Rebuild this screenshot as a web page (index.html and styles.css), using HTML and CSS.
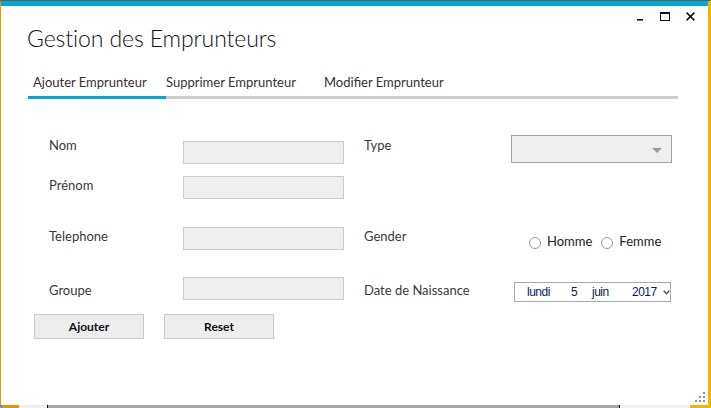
FILE: index.html
```html
<!DOCTYPE html>
<html lang="fr">
<head>
<meta charset="utf-8">
<title>Gestion des Emprunteurs</title>
<link rel="stylesheet" href="styles.css">
</head>
<body>
<div class="desktop">
  <div class="window">
    <div class="chrome">
      <svg class="ctl ctl-min" width="6" height="9" viewBox="0 0 6 9"><rect x="0" y="7" width="6" height="1.6" fill="#111"/></svg>
      <svg class="ctl ctl-max" width="10" height="9" viewBox="0 0 10 9"><rect x="0.5" y="0.5" width="9" height="8" fill="none" stroke="#111" stroke-width="1"/><rect x="0" y="0" width="10" height="2" fill="#111"/></svg>
      <svg class="ctl ctl-close" width="9" height="9" viewBox="0 0 9 9"><path d="M0.6 0.6 L8.4 8.4 M8.4 0.6 L0.6 8.4" stroke="#111" stroke-width="1.5" fill="none"/></svg>
    </div>

    <h1 class="title">Gestion des Emprunteurs</h1>

    <div class="tabs">
      <div class="tab tab-1 active">Ajouter Emprunteur</div>
      <div class="tab tab-2">Supprimer Emprunteur</div>
      <div class="tab tab-3">Modifier Emprunteur</div>
    </div>

    <div class="form">
      <div class="lbl m2">Nom</div>
      <div class="input m6"></div>
      <div></div>
      <div class="lbl m2">Type</div>
      <div class="combo">
        <svg width="10" height="5" viewBox="0 0 10 5"><polygon points="0,0 10,0 5,5" fill="#9a9a9a"/></svg>
      </div>

      <div class="lbl m1">Prénom</div>
      <div class="input"></div>
      <div></div>
      <div></div>
      <div></div>

      <div class="lbl m1">Telephone</div>
      <div class="input"></div>
      <div></div>
      <div class="lbl m1">Gender</div>
      <div class="radios">
        <div class="radio"><span class="dot"></span><span class="rtext">Homme</span></div>
        <div class="radio"><span class="dot"></span><span class="rtext">Femme</span></div>
      </div>

      <div class="lbl m5">Groupe</div>
      <div class="input"></div>
      <div></div>
      <div class="lbl m5">Date de Naissance</div>
      <div class="date">
        <span class="seg seg-day">lundi</span>
        <span class="seg seg-num">5</span>
        <span class="seg seg-month">juin</span>
        <span class="seg seg-year">2017</span>
        <svg class="chev" width="7" height="5" viewBox="0 0 7 5"><path d="M0.7 0.8 L3.5 3.8 L6.3 0.8" stroke="#4a4a4a" stroke-width="1.3" fill="none"/></svg>
      </div>
    </div>

    <div class="actions">
      <button class="btn" type="button">Ajouter</button>
      <button class="btn" type="button">Reset</button>
    </div>

    <svg class="grip" width="10" height="10" viewBox="0 0 10 10">
      <rect x="8" y="0" width="2" height="2" fill="#8f8f8f"/>
      <rect x="4" y="4" width="2" height="2" fill="#8f8f8f"/>
      <rect x="8" y="4" width="2" height="2" fill="#8f8f8f"/>
      <rect x="0" y="8" width="2" height="2" fill="#8f8f8f"/>
      <rect x="4" y="8" width="2" height="2" fill="#8f8f8f"/>
      <rect x="8" y="8" width="2" height="2" fill="#8f8f8f"/>
    </svg>
  </div>

  <div class="taskbar">
    <span class="tb tb-blue"></span>
    <span class="tb tb-orange"></span>
    <span class="tb tb-light"></span>
    <span class="tb tb-black"></span>
    <span class="tb tb-gray"></span>
    <span class="tb tb-black"></span>
    <span class="tb tb-light2"></span>
    <span class="tb tb-yellow"></span>
  </div>
</div>
</body>
</html>
```

FILE: styles.css
```css
* { box-sizing: border-box; }

html, body {
  margin: 0;
  padding: 0;
}

body {
  width: 711px;
  height: 408px;
  overflow: hidden;
  font-family: "Lato", "Open Sans", sans-serif;
}

.desktop {
  width: 711px;
  height: 408px;
  display: flex;
  flex-direction: column;
  background: linear-gradient(to bottom, #6d5b45 0, #6d5b45 1px, transparent 1px),
              linear-gradient(to right, #e49d00 0, #e49d00 1px, #ffffff 1px, #ffffff 708px, #f2b600 708px);
}

.window {
  position: relative;
  margin: 1px 0 0 1px;
  width: 707px;
  height: 404px;
  background: #ffffff;
  border-top: 5px solid #00a6d8;
}

/* window chrome */
.chrome {
  display: flex;
  justify-content: flex-end;
  align-items: flex-start;
  height: 15px;
  padding: 6px 13px 0 0;
}
.ctl { display: block; }
.ctl-max { margin-left: 17px; }
.ctl-close { margin-left: 16px; }

.title {
  margin: 1px 0 0 26px;
  font-family: "Lato", "Open Sans", sans-serif;
  font-weight: 300;
  font-size: 23px;
  letter-spacing: -0.1px;
  line-height: 32px;
  color: #111111;
}

/* tabs */
.tabs {
  display: flex;
  margin: 20px 0 0 27px;
  width: 650px;
  border-bottom: 3px solid #cccccc;
}
.tab {
  font-size: 13px;
  line-height: 16px;
  color: #333333;
  padding-bottom: 6px;
  margin-bottom: -3px;
  border-bottom: 3px solid transparent;
  white-space: nowrap;
}
.tab.active { border-bottom-color: #00a6d8; }
.tab-1 { width: 138px; padding-left: 5px; }
.tab-2 { width: 158px; }

/* form */
.form {
  display: grid;
  grid-template-columns: 134px 161px 20px 147px 1fr;
  grid-template-rows: 41px 51px 50px 37px;
  align-items: start;
  margin-top: 36px;
  padding-left: 48px;
}

.lbl {
  font-size: 13px;
  line-height: 17px;
  color: #3a3a3a;
  white-space: nowrap;
}
.m1 { margin-top: 1px; }
.m2 { margin-top: 2px; }
.m5 { margin-top: 5px; }
.m6 { margin-top: 6px; }

.input {
  height: 23px;
  background: #eeeeee;
  border: 1px solid #cccccc;
}

.combo {
  width: 161px;
  height: 28px;
  background: #eeeeee;
  border: 1px solid #a0a0a0;
  display: flex;
  align-items: center;
  justify-content: flex-end;
  padding: 2px 9px 0 0;
}
.combo svg { display: block; }

.radios {
  display: flex;
  margin: 6px 0 0 18px;
  gap: 9px;
}
.radio {
  display: flex;
  align-items: flex-start;
  gap: 6px;
}
.dot {
  display: block;
  width: 12px;
  height: 12px;
  margin-top: 4px;
  border-radius: 50%;
  border: 1px solid #9a9a9a;
  background: #ffffff;
}
.rtext {
  font-size: 13px;
  line-height: 16px;
  color: #222222;
}

.date {
  display: flex;
  align-items: center;
  width: 157px;
  height: 20px;
  margin: 5px 0 0 3px;
  padding-left: 12px;
  border: 1px solid #a8a8a8;
  font-family: "Liberation Sans", Arial, sans-serif;
  font-size: 12px;
  letter-spacing: -0.5px;
  color: #0b1d5a;
}
.seg { display: block; line-height: 14px; }
.seg-day { width: 44px; }
.seg-num { width: 21px; }
.seg-month { width: 40px; }
.seg-year { width: 31px; }
.chev { display: block; margin-top: 1px; }

/* buttons */
.actions {
  display: flex;
  gap: 20px;
  padding-left: 33px;
}
.btn {
  width: 110px;
  height: 25px;
  margin: 0;
  padding: 0;
  background: #ededed;
  border: 1px solid #c9c9c9;
  font-family: "Lato", "Open Sans", sans-serif;
  font-weight: 700;
  font-size: 12px;
  color: #111111;
}

/* resize grip overlays corner */
.grip {
  position: absolute;
  right: 3px;
  bottom: 3px;
}

/* desktop strip under the window */
.taskbar {
  display: flex;
  height: 3px;
}
.tb { display: block; height: 3px; }
.tb-blue { width: 2px; background: #3ca4e0; }
.tb-orange { width: 17px; background: #e39400; }
.tb-light { width: 28px; background: #efefef; }
.tb-black { width: 1px; background: #111111; }
.tb-gray { width: 571px; background: #a5a5a5; }
.tb-light2 { width: 70px; background: #f1f1f1; }
.tb-yellow { width: 21px; background: #f2b600; }
```
